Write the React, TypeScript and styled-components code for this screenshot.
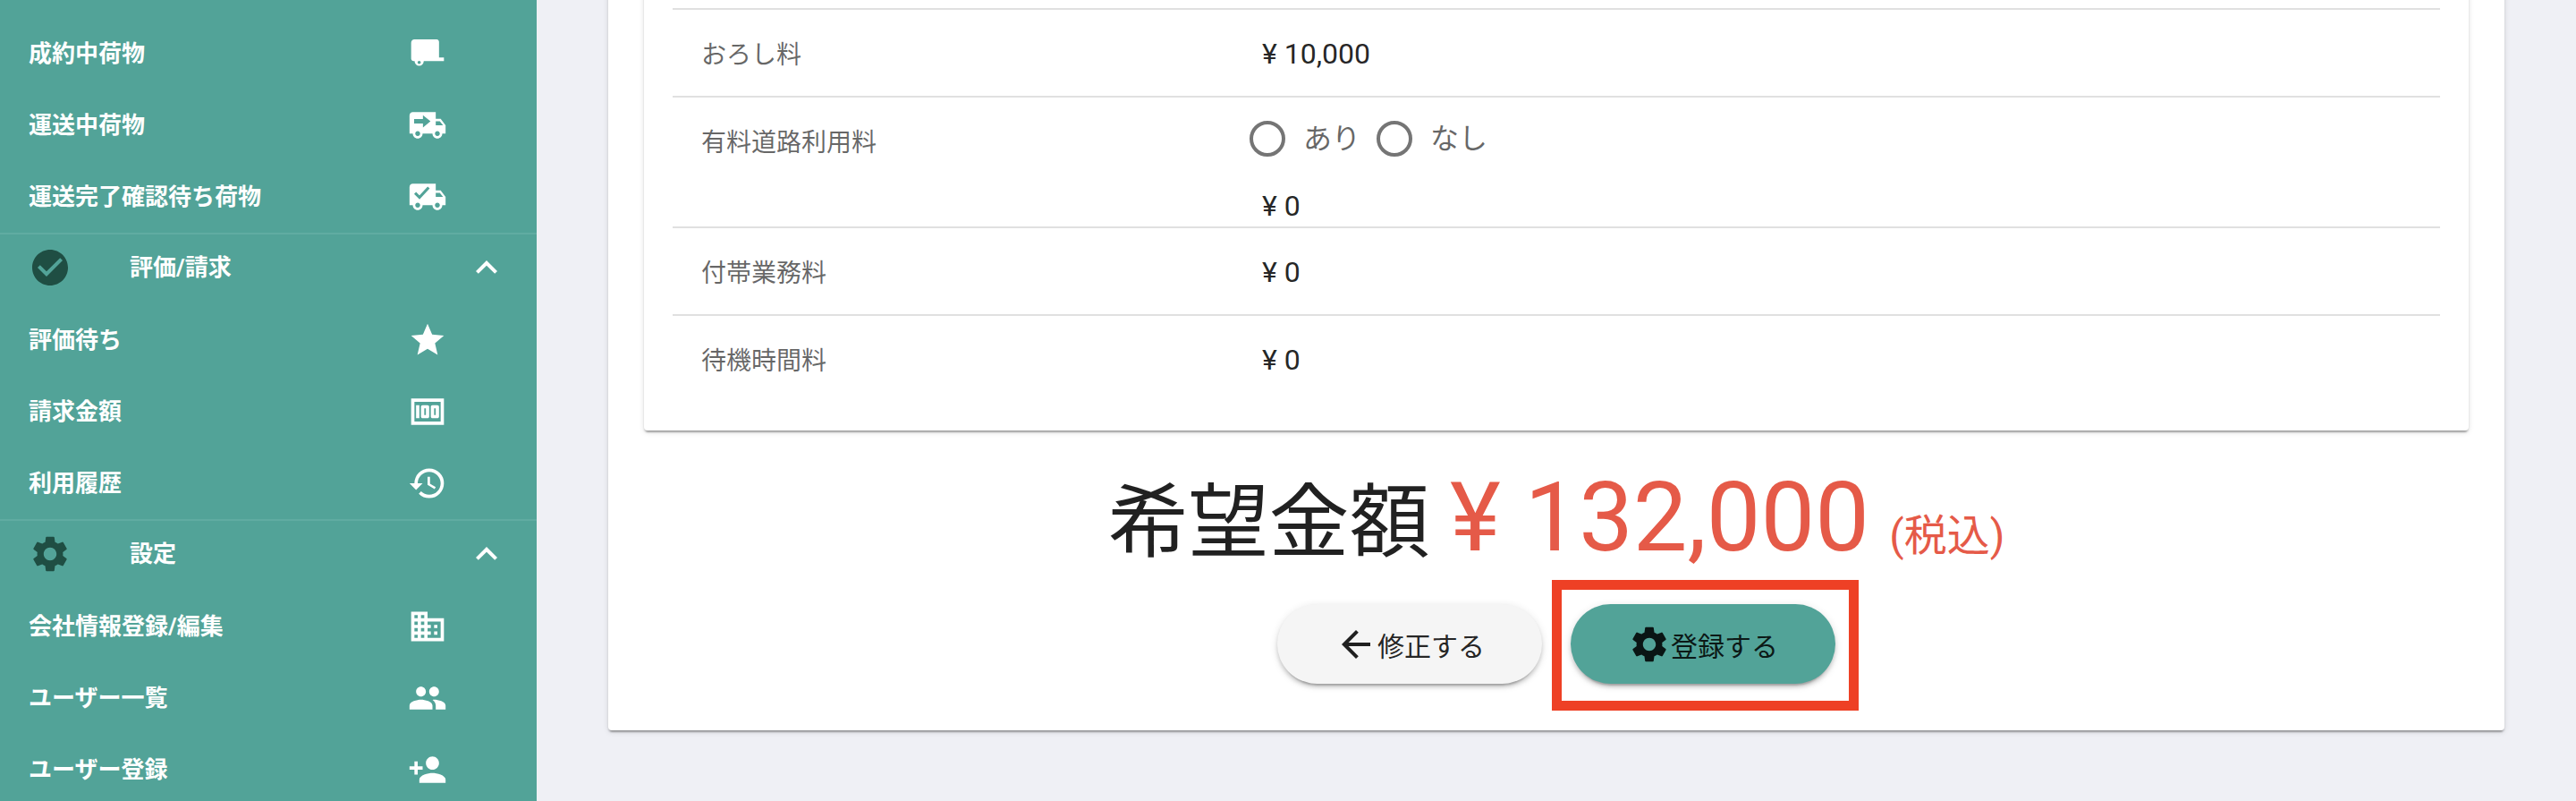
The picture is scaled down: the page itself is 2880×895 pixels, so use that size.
import styled, { createGlobalStyle } from "styled-components";
import type { ReactNode } from "react";
import {
  MdArrowBack,
  MdBusiness,
  MdCheckCircle,
  MdExpandLess,
  MdHistory,
  MdMoney,
  MdPeople,
  MdPersonAdd,
  MdSettings,
  MdStar,
} from "react-icons/md";

const TEAL = "#52a398";

const GlobalStyle = createGlobalStyle`
  html, body {
    margin: 0;
    height: 895px;
    overflow: hidden;
    background: #eff0f5;
    font-family: Roboto, "Noto Sans CJK JP", sans-serif;
  }
`;

const Page = styled.div`
  display: flex;
  height: 895px;
  overflow: hidden;
`;

const Sidebar = styled.nav`
  flex: 0 0 600px;
  box-sizing: border-box;
  padding-top: 20px;
  background: ${TEAL};
  color: #fff;
`;

const NavItem = styled.div`
  display: flex;
  align-items: center;
  justify-content: space-between;
  height: 80px;
  padding: 0 100px 0 32px;
  font-size: 26px;
  font-weight: 700;
`;

const NavLabel = styled.span`
  padding-bottom: 5px;
`;

const NavSection = styled.div`
  display: flex;
  align-items: center;
  box-sizing: border-box;
  height: 80px;
  padding: 0 32px 4px;
  border-top: 2px solid #60aca2;
  font-size: 26px;
  font-weight: 700;

  svg {
    flex: none;
  }
`;

const SectionIcon = styled.span`
  display: flex;
  color: #1f4e43;
`;

const SectionLabel = styled.span`
  flex: 1;
  margin-left: 65px;
  padding-bottom: 5px;
`;

const Main = styled.main`
  flex: 1;
  padding: 0 80px;
`;

const Paper = styled.section`
  margin-top: -80px;
  padding: 40px 40px 52px;
  background: #fff;
  border-radius: 4px;
  box-shadow: 0 4px 2px -2px rgba(0, 0, 0, 0.2), 0 2px 2px rgba(0, 0, 0, 0.14),
    0 2px 6px rgba(0, 0, 0, 0.12);
`;

const Card = styled.div`
  padding: 49px 32px 32px;
  background: #fff;
  border-radius: 4px;
  box-shadow: 0 4px 2px -2px rgba(0, 0, 0, 0.2), 0 2px 2px rgba(0, 0, 0, 0.14),
    0 2px 6px rgba(0, 0, 0, 0.12);
`;

const Row = styled.div<{ $tall?: boolean }>`
  display: grid;
  grid-template-columns: 627px 1fr;
  padding: 29px 0 ${(p) => (p.$tall ? 3 : 27)}px 32px;
  border-top: 2px solid #e0e0e0;
  line-height: 40px;
`;

const Label = styled.div`
  box-sizing: border-box;
  height: 40px;
  padding-top: 2px;
  font-size: 28px;
  color: rgba(0, 0, 0, 0.6);
`;

const Value = styled.div`
  font-size: 32px;
  color: rgba(0, 0, 0, 0.87);
`;

const RadioGroup = styled.div`
  display: flex;
  align-items: center;
  margin: -7px 0 31px -18px;
  color: rgba(0, 0, 0, 0.6);
`;

const RadioOption = styled.label`
  display: flex;
  align-items: center;
  gap: 16px;
  margin-right: 14px;
`;

const RadioRing = styled.span`
  display: block;
  box-sizing: border-box;
  width: 40px;
  height: 40px;
  margin: 4px;
  border: 4px solid #757575;
  border-radius: 50%;
`;

const Total = styled.div`
  margin-top: 29px;
  height: 150px;
  font-size: 90px;
  line-height: 150px;
  text-align: center;
  color: rgba(0, 0, 0, 0.87);
`;

const Amount = styled.span`
  font-size: 108px;
  line-height: 1;
  color: #e55a48;
`;

const TaxNote = styled.span`
  font-size: 48px;
  line-height: 1;
  color: #e55a48;
`;

const Actions = styled.div`
  display: flex;
  justify-content: center;
  gap: 32px;
  margin-top: 15px;
`;

const HighlightWrap = styled.div`
  position: relative;
`;

const Highlight = styled.span`
  position: absolute;
  inset: -27px -26px -30px -21px;
  border: 11px solid #ee4025;
  pointer-events: none;
`;

const Button = styled.button<{ $primary?: boolean }>`
  display: flex;
  align-items: center;
  justify-content: center;
  width: 296px;
  height: 89px;
  padding: 0;
  border: 0;
  border-radius: 45px;
  background: ${(p) => (p.$primary ? TEAL : "#f5f5f5")};
  color: rgba(0, 0, 0, 0.87);
  font-family: inherit;
  font-size: 30px;
  box-shadow: 0 6px 2px -4px rgba(0, 0, 0, 0.2), 0 4px 4px rgba(0, 0, 0, 0.14),
    0 2px 10px rgba(0, 0, 0, 0.12);
`;

const TruckBox = () => (
  <svg width="44" height="44" viewBox="0 0 24 24" fill="#fff">
    <path
      fillRule="evenodd"
      d="M4 3.3h13.5c.8 0 1.5.7 1.5 1.5v9.5h3v2.2H9.7a2.8 2.8 0 0 1-5.6 0H3.5c-.8 0-1.5-.7-1.5-1.5V5.3c0-1.1.9-2 2-2zM6.9 16.3a1 1 0 1 0 0 2 1 1 0 0 0 0-2z"
    />
  </svg>
);

const TRUCK =
  "M20 8h-3V4H3c-1.1 0-2 .9-2 2v11h2c0 1.66 1.34 3 3 3s3-1.34 3-3h6c0 1.66 1.34 3 3 3s3-1.34 3-3h2v-5l-3-4zM6 18.5c-.83 0-1.5-.67-1.5-1.5s.67-1.5 1.5-1.5 1.5.67 1.5 1.5-.67 1.5-1.5 1.5zm13.5-9l1.96 2.5H17V9.5h2.5zm-1.5 9c-.83 0-1.5-.67-1.5-1.5s.67-1.5 1.5-1.5 1.5.67 1.5 1.5-.67 1.5-1.5 1.5z";

const TruckArrow = () => (
  <svg width="44" height="44" viewBox="0 0 24 24">
    <path fill="#fff" d={TRUCK} />
    <path fill={TEAL} d="M3.8 8.2h5.4V5.9l4.6 3.7-4.6 3.7v-2.4H3.8z" />
  </svg>
);

const TruckCheck = () => (
  <svg width="44" height="44" viewBox="0 0 24 24">
    <path fill="#fff" d={TRUCK} />
    <path fill="none" stroke={TEAL} strokeWidth="1.7" d="M4.4 9.6l2.7 2.7 5.6-6" />
  </svg>
);

const items: { label: string; icon: ReactNode }[][] = [
  [
    { label: "成約中荷物", icon: <TruckBox /> },
    { label: "運送中荷物", icon: <TruckArrow /> },
    { label: "運送完了確認待ち荷物", icon: <TruckCheck /> },
  ],
  [
    { label: "評価待ち", icon: <MdStar size={44} /> },
    { label: "請求金額", icon: <MdMoney size={44} /> },
    { label: "利用履歴", icon: <MdHistory size={44} /> },
  ],
  [
    { label: "会社情報登録/編集", icon: <MdBusiness size={44} /> },
    { label: "ユーザー一覧", icon: <MdPeople size={44} /> },
    { label: "ユーザー登録", icon: <MdPersonAdd size={44} /> },
  ],
];

const sections = [
  { label: "", icon: null },
  { label: "評価/請求", icon: <MdCheckCircle size={48} /> },
  { label: "設定", icon: <MdSettings size={48} /> },
];

export default function App() {
  return (
    <Page>
      <GlobalStyle />
      <Sidebar>
        {items.map((group, i) => (
          <div key={i}>
            {sections[i].icon ? (
              <NavSection>
                <SectionIcon>{sections[i].icon}</SectionIcon>
                <SectionLabel>{sections[i].label}</SectionLabel>
                <MdExpandLess size={48} />
              </NavSection>
            ) : null}
            {group.map((item) => (
              <NavItem key={item.label}>
                <NavLabel>{item.label}</NavLabel>
                {item.icon}
              </NavItem>
            ))}
          </div>
        ))}
      </Sidebar>
      <Main>
        <Paper>
          <Card>
            <Row>
              <Label>おろし料</Label>
              <Value>¥ 10,000</Value>
            </Row>
            <Row $tall>
              <Label>有料道路利用料</Label>
              <Value>
                <RadioGroup>
                  <RadioOption>
                    <RadioRing />
                    あり
                  </RadioOption>
                  <RadioOption>
                    <RadioRing />
                    なし
                  </RadioOption>
                </RadioGroup>
                ¥ 0
              </Value>
            </Row>
            <Row>
              <Label>付帯業務料</Label>
              <Value>¥ 0</Value>
            </Row>
            <Row>
              <Label>待機時間料</Label>
              <Value>¥ 0</Value>
            </Row>
          </Card>
          <Total>
            希望金額 <Amount>¥ 132,000</Amount> <TaxNote>(税込)</TaxNote>
          </Total>
          <Actions>
            <Button>
              <MdArrowBack size={48} />
              修正する
            </Button>
            <HighlightWrap>
              <Button $primary>
                <MdSettings size={48} />
                登録する
              </Button>
              <Highlight />
            </HighlightWrap>
          </Actions>
        </Paper>
      </Main>
    </Page>
  );
}
